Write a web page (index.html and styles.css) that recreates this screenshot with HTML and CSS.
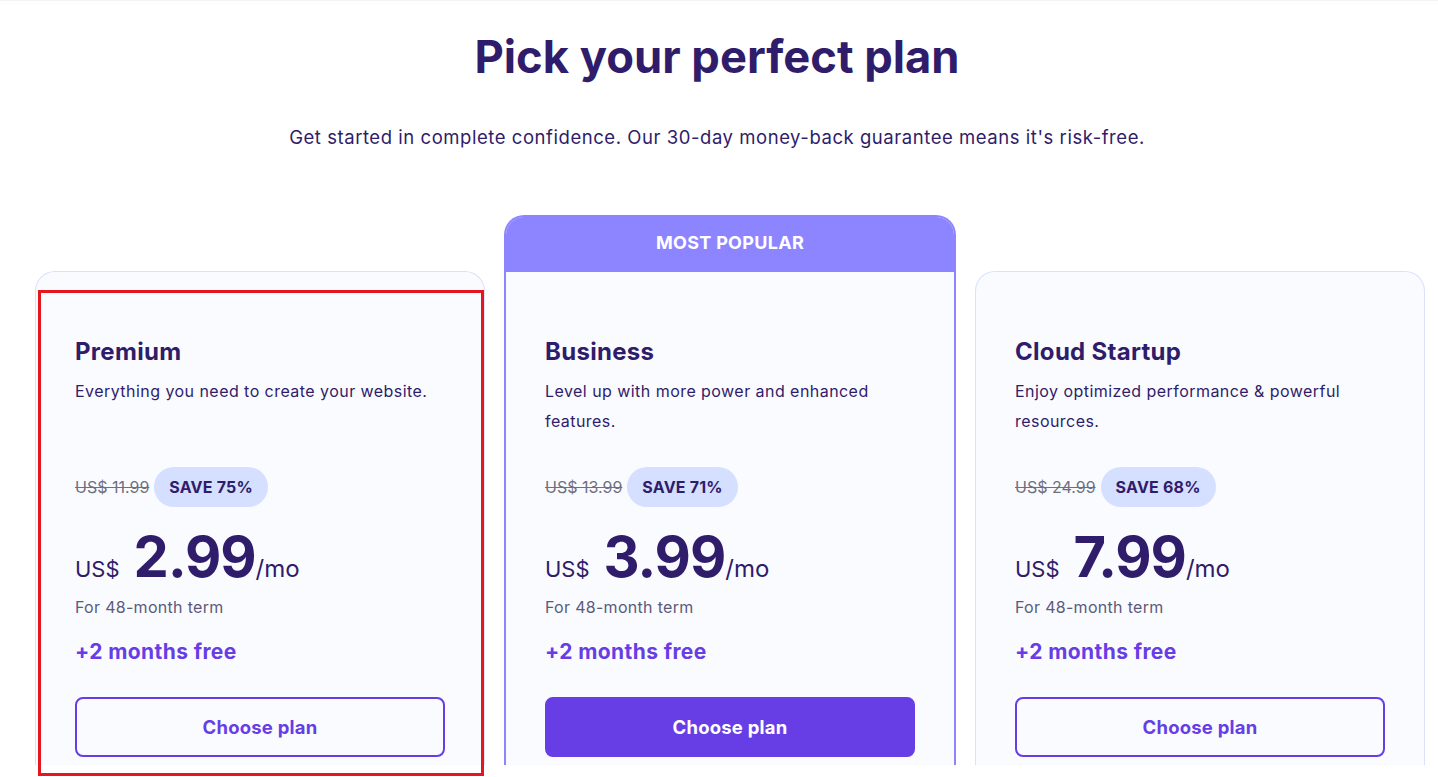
FILE: index.html
```html
<!DOCTYPE html>
<html lang="en">
<head>
<meta charset="utf-8">
<title>Pick your perfect plan</title>
<link rel="stylesheet" href="styles.css">
</head>
<body>
<div class="topbar"></div>
<section class="pricing">
  <h1 class="title">Pick your perfect plan</h1>
  <p class="lead">Get started in complete confidence. Our 30-day money-back guarantee means it's risk-free.</p>
  <div class="cards">
    <div class="card">
      <div class="card-body">
        <h2 class="plan">Premium</h2>
        <p class="desc">Everything you need to create your website.</p>
        <div class="old-row"><span class="old">US$ 11.99</span><span class="save">SAVE 75%</span></div>
        <div class="price"><span class="cur">US$</span><span class="amount">2.99</span><span class="per">/mo</span></div>
        <p class="term">For 48-month term</p>
        <p class="free">+2 months free</p>
        <button class="btn">Choose plan</button>
      </div>
    </div>
    <div class="card popular">
      <div class="ribbon">MOST POPULAR</div>
      <div class="card-body">
        <h2 class="plan">Business</h2>
        <p class="desc">Level up with more power and enhanced features.</p>
        <div class="old-row"><span class="old">US$ 13.99</span><span class="save">SAVE 71%</span></div>
        <div class="price"><span class="cur">US$</span><span class="amount">3.99</span><span class="per">/mo</span></div>
        <p class="term">For 48-month term</p>
        <p class="free">+2 months free</p>
        <button class="btn btn-solid">Choose plan</button>
      </div>
    </div>
    <div class="card">
      <div class="card-body">
        <h2 class="plan">Cloud Startup</h2>
        <p class="desc">Enjoy optimized performance &amp; powerful resources.</p>
        <div class="old-row"><span class="old">US$ 24.99</span><span class="save">SAVE 68%</span></div>
        <div class="price"><span class="cur">US$</span><span class="amount">7.99</span><span class="per">/mo</span></div>
        <p class="term">For 48-month term</p>
        <p class="free">+2 months free</p>
        <button class="btn">Choose plan</button>
      </div>
    </div>
  </div>
</section>
<div class="highlight"></div>
</body>
</html>
```

FILE: styles.css
```css
* { box-sizing: border-box; }
html, body { margin: 0; padding: 0; background: #ffffff; }
body {
  font-family: "Inter", "Liberation Sans", sans-serif;
  color: #2f1c6a;
  width: 1438px;
  height: 777px;
  overflow: hidden;
  position: relative;
}
.topbar {
  height: 1px;
  background: #f4f4f4;
  box-shadow: 0 1px 5px rgba(0,0,0,0.06);
}
.pricing {
  display: flex;
  flex-direction: column;
  align-items: center;
}
.title {
  margin: 28px 0 0 -4px;
  font-size: 45.3px;
  line-height: 56px;
  font-weight: 700;
  color: #2f1c6a;
}
.lead {
  margin: 38px 0 0 -4px;
  font-size: 18.5px;
  line-height: 28px;
  letter-spacing: 0.55px;
  color: #2f1c6a;
}
.cards {
  align-self: flex-start;
  margin-left: 35px;
  margin-top: 120px;
  display: grid;
  grid-template-columns: 450px 452px 450px;
  column-gap: 19px;
  height: 494px;
}
.card {
  background: #fafbff;
  border: 1px solid #dae1fb;
  border-bottom: none;
  border-radius: 20px 20px 0 0;
  height: 494px;
}
.popular {
  margin-top: -56px;
  height: 550px;
  border: 2px solid #8c85ff;
  border-bottom: none;
  display: flex;
  flex-direction: column;
  overflow: hidden;
}
.ribbon {
  background: #8c85ff;
  color: #ffffff;
  font-weight: 700;
  font-size: 18px;
  height: 55px;
  padding-bottom: 4px;
  display: flex;
  align-items: center;
  justify-content: center;
  letter-spacing: 0.3px;
}
.card-body {
  padding: 64px 39px 0 39px;
  display: flex;
  flex-direction: column;
  align-items: flex-start;
}
.plan {
  margin: 0;
  font-size: 24px;
  line-height: 32px;
  font-weight: 700;
  letter-spacing: 0.3px;
  color: #2f1c6a;
}
.desc {
  margin: 8px 0 0 0;
  font-size: 16px;
  line-height: 30px;
  letter-spacing: 0.45px;
  min-height: 60px;
  color: #2f1c6a;
}
.old-row {
  margin-top: 31px;
  display: flex;
  align-items: center;
  gap: 5px;
}
.old {
  font-size: 16px;
  color: #6d7081;
  text-decoration: line-through;
}
.save {
  background: #d5dfff;
  border-radius: 20px;
  height: 40px;
  padding: 0 15px;
  display: flex;
  align-items: center;
  font-weight: 700;
  font-size: 16px;
  letter-spacing: 0.2px;
  color: #2f1c6a;
}
.price {
  margin-top: 18px;
  display: flex;
  align-items: baseline;
  height: 64px;
}
.cur { font-size: 22px; color: #2f1c6a; margin-right: 14px; }
.amount { font-size: 56px; font-weight: 700; color: #2f1c6a; letter-spacing: -1px; line-height: 64px; }
.per { font-size: 24px; color: #2f1c6a; }
.term {
  margin: 6px 0 0 0;
  font-size: 16px;
  line-height: 24px;
  letter-spacing: 0.3px;
  color: #5c5a7a;
}
.free {
  margin: 19px 0 0 0;
  font-size: 21px;
  line-height: 28px;
  font-weight: 700;
  letter-spacing: 0.4px;
  color: #673de6;
}
.btn {
  margin-top: 31px;
  width: 370px;
  height: 60px;
  border: 2px solid #673de6;
  border-radius: 8px;
  background: transparent;
  color: #673de6;
  font-family: inherit;
  font-size: 18.5px;
  font-weight: 700;
  letter-spacing: 0.2px;
  cursor: pointer;
}
.btn-solid {
  background: #673de6;
  color: #ffffff;
}
.highlight {
  position: absolute;
  left: 38px;
  top: 290px;
  width: 446px;
  height: 486px;
  border: 3px solid #e5161e;
  pointer-events: none;
}
```
